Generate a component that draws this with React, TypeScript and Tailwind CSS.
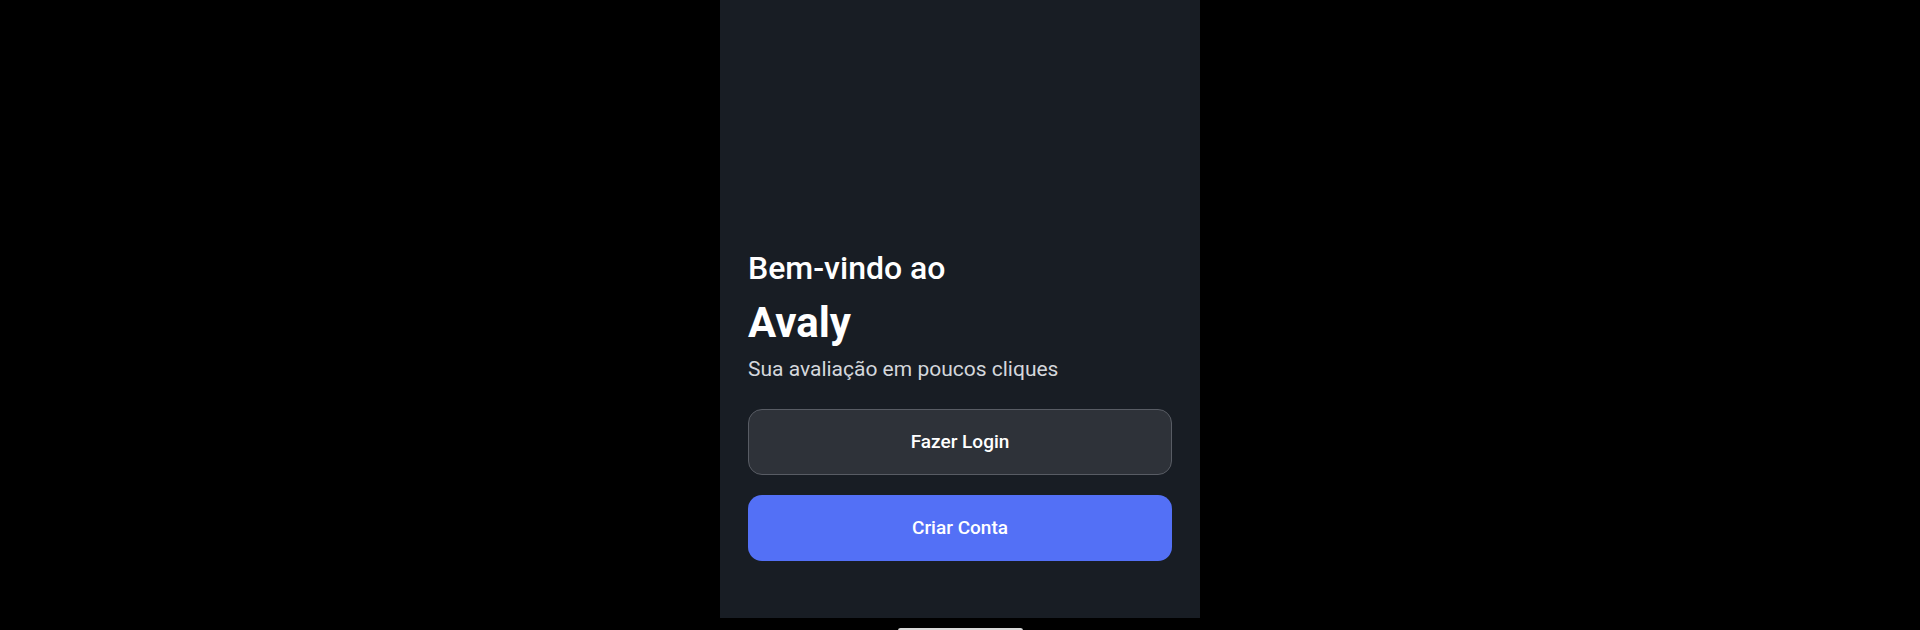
export default function App() {
  return (
    <div className="h-[630px] w-full overflow-hidden bg-black flex flex-col items-center font-['Roboto',sans-serif]">
      <div className="w-[480px] h-[618px] shrink-0 bg-[#181d24] flex flex-col justify-end px-7 pb-[57px]">
        <h2 className="text-[32px] leading-[40px] font-medium text-white">Bem-vindo ao</h2>
        <h1 className="mt-[10px] text-[42px] leading-[50px] font-bold text-white">Avaly</h1>
        <p className="mt-[7px] text-[21px] leading-[28px] text-[#d4d7dc]">
          Sua avaliação em poucos cliques
        </p>

        <div className="mt-[26px] flex flex-col gap-[20px]">
          <button className="h-[66px] rounded-[14px] bg-[#2e3239] border border-[#585c64] text-white text-[19px] font-medium">
            Fazer Login
          </button>
          <button className="h-[66px] rounded-[14px] bg-[#5370f6] text-white text-[19px] font-medium">
            Criar Conta
          </button>
        </div>
      </div>
      <div className="mt-[10px] w-[125px] h-[5px] shrink-0 rounded-full bg-[#d9d9d9]" />
    </div>
  );
}
